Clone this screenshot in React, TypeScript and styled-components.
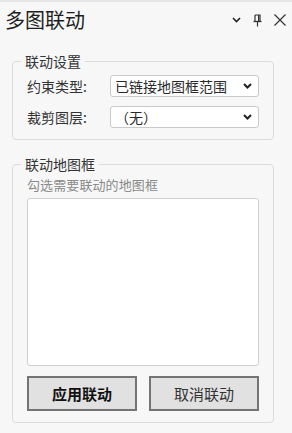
import React from 'react';
import styled, { createGlobalStyle } from 'styled-components';

const GlobalStyle = createGlobalStyle`
  html, body {
    margin: 0;
    padding: 0;
    background: #f7f7f7;
  }
  body {
    font-family: "Noto Sans CJK SC", "Noto Sans", sans-serif;
    color: #333;
  }
`;

const Panel = styled.div`
  width: 292px;
  height: 433px;
  box-sizing: border-box;
  border-top: 2px solid #e6e6e6;
  background: #f7f7f7;
  overflow: hidden;
`;

const Header = styled.div`
  display: flex;
  align-items: center;
  justify-content: space-between;
  height: 34px;
  padding: 0 6px 0 5px;
  margin-bottom: 17px;
`;

const Title = styled.div`
  font-size: 20px;
  line-height: 24px;
  color: #1e1e1e;
  margin-top: 1px;
`;

const HeaderIcons = styled.div`
  display: flex;
  align-items: center;
  gap: 12px;
  margin-top: 2px;
`;

const Group = styled.fieldset<{ $gap?: number }>`
  margin: ${p => p.$gap ?? 0}px 18px 0 12px;
  padding: 0 14px 11px 14px;
  border: 1px solid #dcdcdc;
  border-radius: 4px;
  min-width: 0;
`;

const Legend = styled.legend`
  font-size: 14px;
  line-height: 16px;
  color: #333;
  padding: 0 4px;
  margin-left: -6px;
`;

const Rows = styled.div`
  display: flex;
  flex-direction: column;
  gap: 9px;
  padding-top: 6px;
`;

const Row = styled.div`
  display: flex;
  align-items: center;
`;

const Label = styled.span`
  width: 83px;
  font-size: 14px;
  color: #333;
`;

const Select = styled.div`
  flex: 1;
  height: 22px;
  box-sizing: border-box;
  display: flex;
  align-items: center;
  justify-content: space-between;
  padding: 0 6px 0 4px;
  border: 1px solid #c9c9c9;
  border-radius: 3px;
  background: #fff;
  font-size: 14px;
  color: #2a2a2a;
  white-space: nowrap;
`;

const Hint = styled.div`
  font-size: 13px;
  line-height: 18px;
  color: #8a8a8a;
  margin-top: 4px;
  letter-spacing: 0.1px;
`;

const ListBox = styled.div`
  height: 168px;
  box-sizing: border-box;
  margin-top: 4px;
  border: 1px solid #cfcfcf;
  border-radius: 3px;
  background: #fff;
`;

const Buttons = styled.div`
  display: grid;
  grid-template-columns: 1fr 1fr;
  gap: 12px;
  margin-top: 10px;
`;

const Button = styled.button<{ $primary?: boolean }>`
  height: 35px;
  border: 2px solid #747474;
  background: #e1e1e1;
  font-family: inherit;
  font-size: 15px;
  font-weight: ${p => (p.$primary ? 700 : 400)};
  color: ${p => (p.$primary ? '#111' : '#333')};
  padding: 0;
`;

const Chevron = ({ w = 9, stroke = 1.6 }: { w?: number; stroke?: number }) => (
  <svg width={w} height={6} viewBox="0 0 9 6">
    <path d="M1 1 L4.5 4.5 L8 1" fill="none" stroke="#222" strokeWidth={stroke} />
  </svg>
);

const PinIcon = () => (
  <svg width={9} height={13} viewBox="0 0 9 13">
    <path d="M2 1 H7 V7.5 M2 1 V7.5" fill="none" stroke="#333" strokeWidth={1.2} />
    <path d="M5.6 1 V7.5" stroke="#333" strokeWidth={1.2} />
    <path d="M0.5 7.5 H8.5" stroke="#333" strokeWidth={1.3} />
    <path d="M4.5 7.5 V12.5" stroke="#333" strokeWidth={1.2} />
  </svg>
);

const CloseIcon = () => (
  <svg width={12} height={12} viewBox="0 0 12 12">
    <path d="M0.5 0.5 L11.5 11.5 M11.5 0.5 L0.5 11.5" stroke="#333" strokeWidth={1.2} />
  </svg>
);

const App: React.FC = () => {
  return (
    <>
      <GlobalStyle />
      <Panel>
        <Header>
          <Title>多图联动</Title>
          <HeaderIcons>
            <Chevron />
            <PinIcon />
            <CloseIcon />
          </HeaderIcons>
        </Header>

        <Group>
          <Legend>联动设置</Legend>
          <Rows>
            <Row>
              <Label>约束类型:</Label>
              <Select>
                <span>已链接地图框范围</span>
                <Chevron stroke={2} />
              </Select>
            </Row>
            <Row>
              <Label>裁剪图层:</Label>
              <Select>
                <span>（无）</span>
                <Chevron stroke={2} />
              </Select>
            </Row>
          </Rows>
        </Group>

        <Group $gap={16}>
          <Legend>联动地图框</Legend>
          <Hint>勾选需要联动的地图框</Hint>
          <ListBox />
          <Buttons>
            <Button $primary>应用联动</Button>
            <Button>取消联动</Button>
          </Buttons>
        </Group>
      </Panel>
    </>
  );
};

export default App;
